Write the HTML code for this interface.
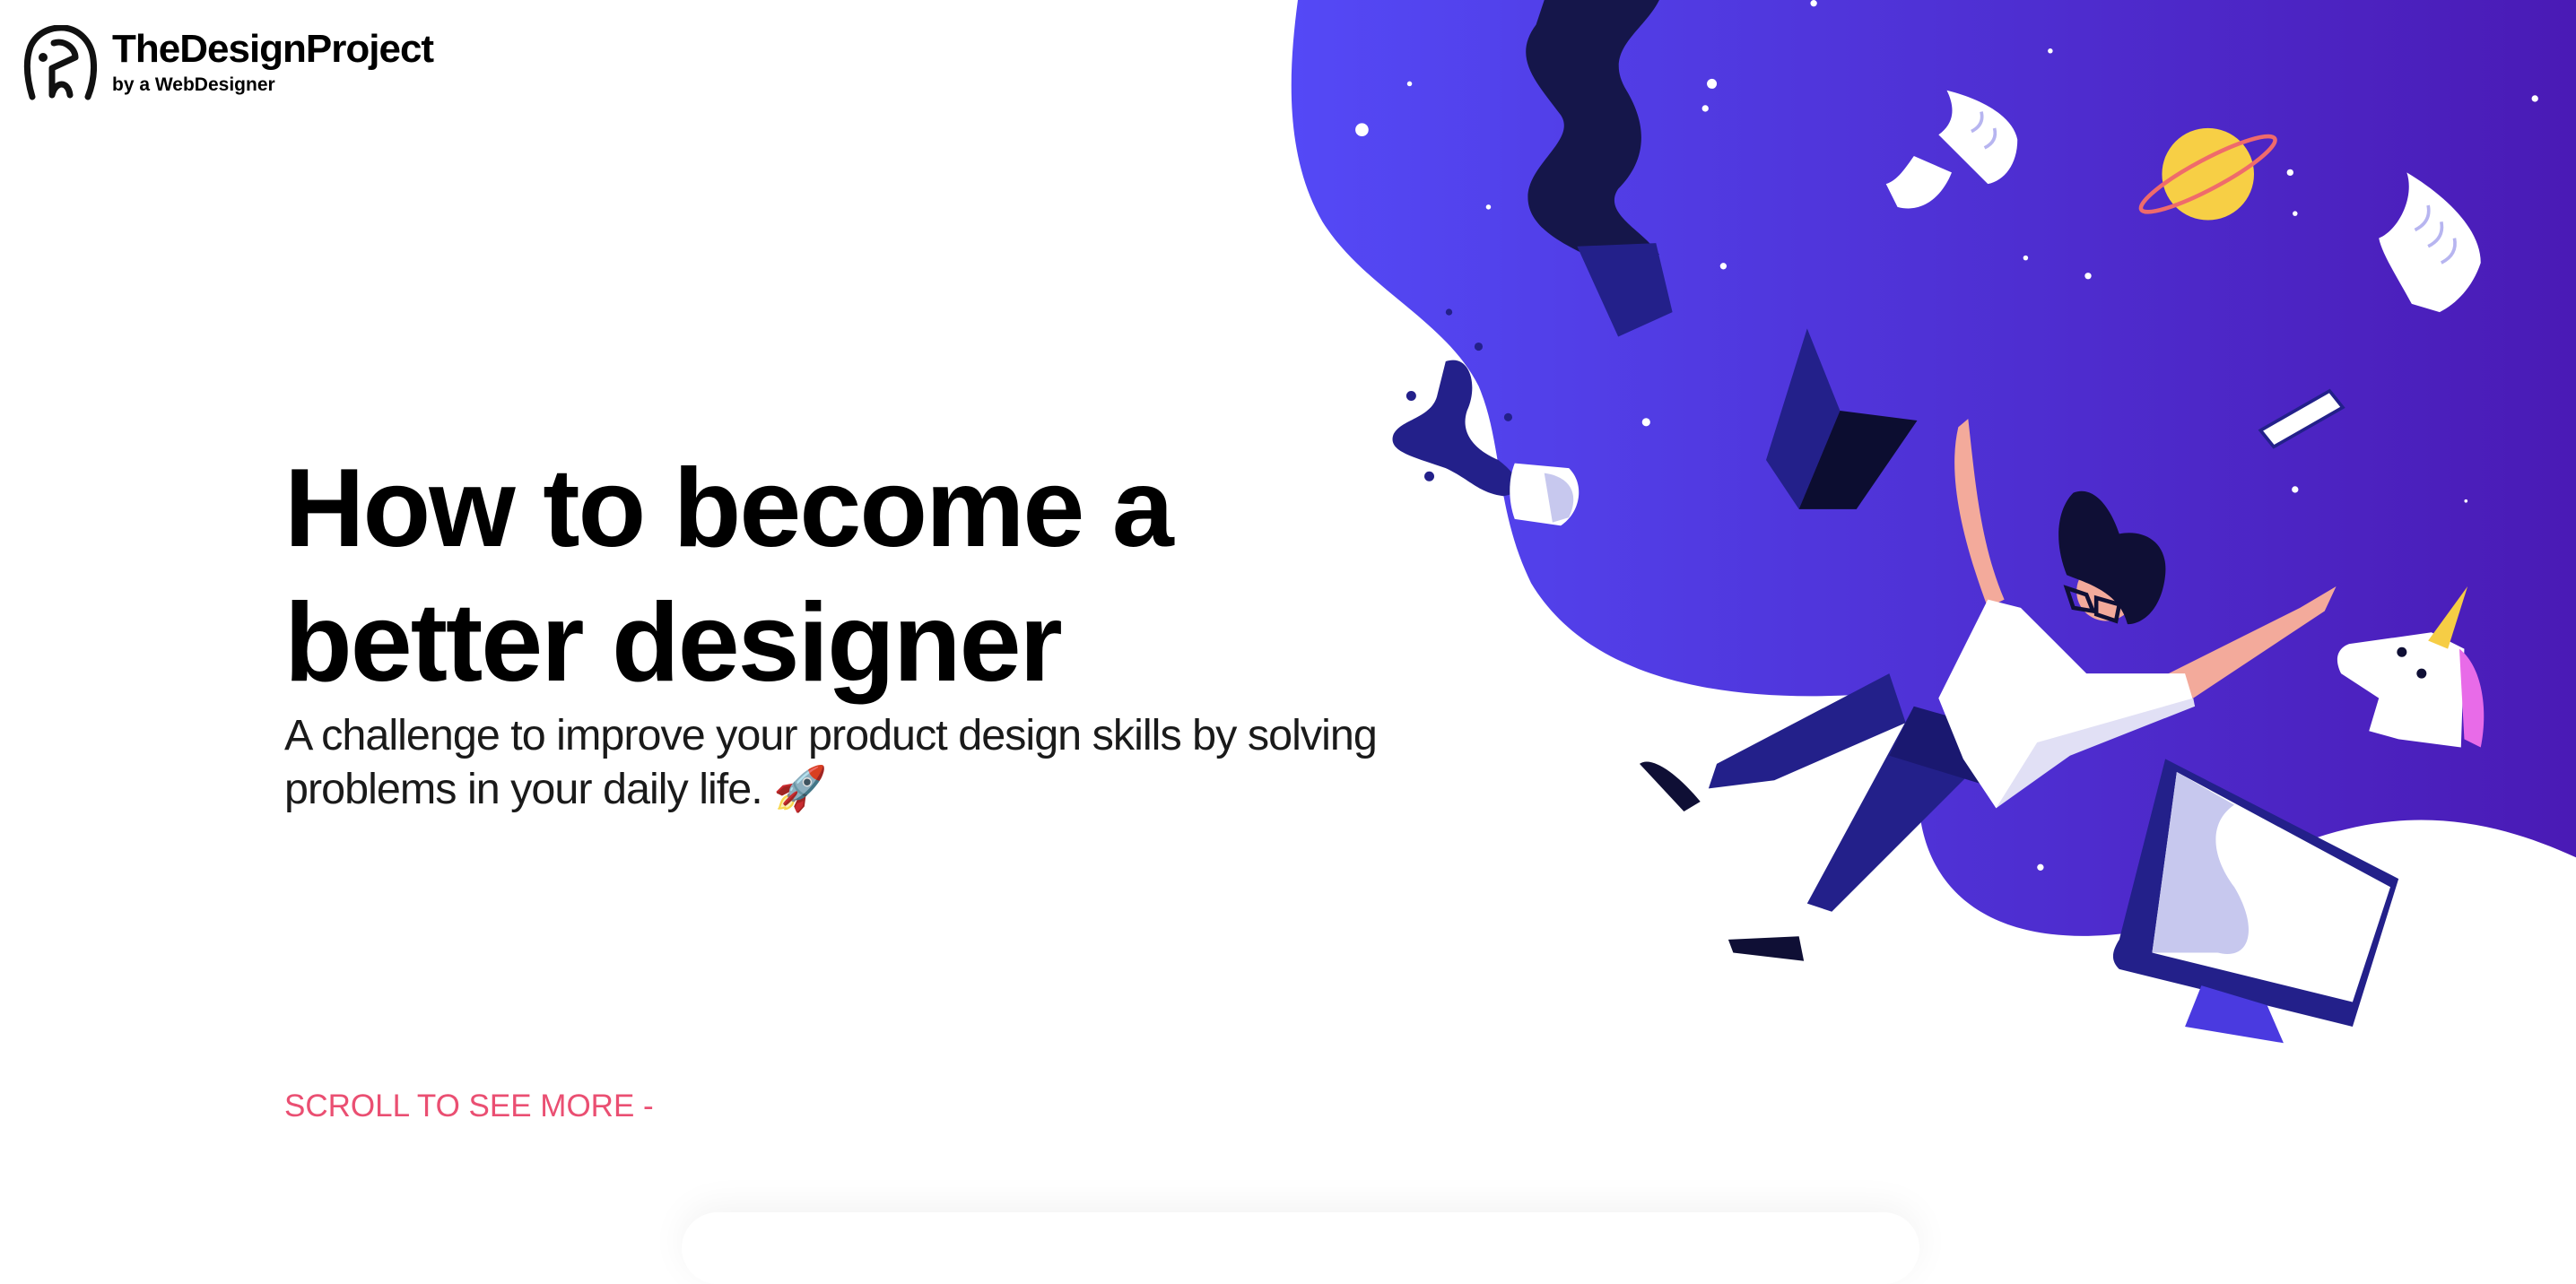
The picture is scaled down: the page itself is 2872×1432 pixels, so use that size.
<!DOCTYPE html>
<html><head><meta charset="utf-8">
<style>
html,body{margin:0;padding:0;width:2872px;height:1352px;overflow:hidden;background:#fff;font-family:"Liberation Sans",sans-serif;}
.abs{position:absolute;}
h1{position:absolute;left:317px;top:492px;margin:0;font-size:124px;line-height:150px;font-weight:bold;color:#000;letter-spacing:-2px;}
.sub{position:absolute;left:317px;top:790px;font-size:48.5px;line-height:60px;color:#1a1a1a;font-weight:normal;letter-spacing:-1px;}
.scroll{position:absolute;left:317px;top:1214px;font-size:35px;color:#ea4f72;}
.logo1{position:absolute;left:125px;top:30px;font-size:44px;font-weight:bold;letter-spacing:-1px;}
.logo2{position:absolute;left:125px;top:83px;font-size:21px;font-weight:bold;}
.shadow{position:absolute;left:760px;top:1352px;width:1380px;height:80px;border-radius:40px;box-shadow:0 -8px 40px rgba(0,0,0,0.05);background:#fff;}
</style></head><body>
<svg class="abs" style="left:0;top:0" width="2872" height="1352" viewBox="0 0 1568 738" preserveAspectRatio="none">
<defs>
<linearGradient id="g" x1="0" x2="1" y1="0" y2="0">
<stop offset="0" stop-color="#5449f6"/><stop offset="1" stop-color="#4a1ab5"/>
</linearGradient>
</defs>
<path d="M790,0 C784,45 782,95 805,135 C830,175 880,195 900,235 C915,270 910,310 932,355 C965,410 1040,428 1130,423 C1160,421 1166,445 1168,490 C1172,545 1215,578 1295,568 L1410,510 C1470,490 1520,500 1568,522 L1568,0 Z" fill="url(#g)"/>
<g fill="#fff">
<circle cx="829" cy="79" r="4"/><circle cx="858" cy="51" r="1.5"/><circle cx="906" cy="126" r="1.5"/><circle cx="1042" cy="51" r="3"/><circle cx="1038" cy="66" r="2"/><circle cx="1049" cy="162" r="2"/><circle cx="1104" cy="2" r="2"/><circle cx="1248" cy="31" r="1.5"/><circle cx="1233" cy="157" r="1.5"/><circle cx="1271" cy="168" r="2"/><circle cx="1002" cy="257" r="2.5"/><circle cx="1099" cy="263" r="3"/><circle cx="1394" cy="105" r="2"/><circle cx="1397" cy="130" r="1.5"/><circle cx="1397" cy="298" r="2"/><circle cx="1501" cy="305" r="1"/><circle cx="1543" cy="60" r="2"/><circle cx="1210" cy="400" r="2.5"/><circle cx="1242" cy="528" r="2"/>
</g>
<path d="M940,0 L1010,0 C1000,20 975,30 990,55 C1005,80 1000,100 985,115 C975,130 1000,140 1010,155 L975,160 C955,150 930,140 930,120 C930,100 960,85 950,70 C935,50 920,35 935,15 Z" fill="#15164a"/>
<path d="M960,150 L1008,148 L1018,190 L985,205 Z" fill="#23208a"/>
<path d="M880,220 C895,215 900,235 893,250 C888,265 900,275 912,280 C925,290 930,300 915,302 C900,300 895,292 880,285 C860,278 845,275 848,265 C852,255 872,255 875,240 Z" fill="#23208a"/>
<circle cx="859" cy="241" r="3" fill="#23208a"/><circle cx="900" cy="211" r="2.5" fill="#23208a"/><circle cx="870" cy="290" r="3" fill="#23208a"/><circle cx="918" cy="254" r="2.5" fill="#23208a"/><circle cx="882" cy="190" r="2" fill="#23208a"/>
<path d="M922,282 L955,285 C965,295 962,312 950,320 L922,316 C918,305 918,292 922,282 Z" fill="#fff"/>
<path d="M940,288 C955,290 962,300 955,315 L945,318 Z" fill="#c7c8ee"/>
<path d="M1100,200 L1075,280 L1095,310 L1120,250 Z" fill="#23208a"/>
<path d="M1120,250 L1167,256 L1130,310 L1095,310 Z" fill="#0c0d30"/>
<path d="M1185,55 C1205,60 1225,70 1228,85 C1228,100 1220,110 1210,112 L1180,82 C1190,75 1190,65 1185,55 Z" fill="#fff"/>
<path d="M1165,95 L1188,105 C1182,120 1170,130 1155,126 L1148,112 C1155,110 1160,102 1165,95 Z" fill="#fff"/>
<path d="M1465,105 C1490,120 1510,140 1510,160 C1505,175 1495,185 1485,190 L1468,185 C1460,170 1450,155 1448,145 C1460,140 1470,120 1465,105 Z" fill="#fff"/>
<g stroke="#b7b5f0" stroke-width="2" fill="none"><path d="M1470,140 q10,-5 8,-15"/><path d="M1478,150 q10,-5 8,-15"/><path d="M1486,160 q10,-5 8,-15"/><path d="M1200,80 q8,-4 6,-12"/><path d="M1208,90 q8,-4 6,-12"/></g>
<circle cx="1344" cy="106" r="28" fill="#f7cf45"/>
<ellipse cx="1344" cy="106" rx="46" ry="9" fill="none" stroke="#ef6b6b" stroke-width="2.5" transform="rotate(-28 1344 106)"/>
<path d="M1376,262 L1418,238 L1426,248 L1384,272 Z" fill="#fff" stroke="#23208a" stroke-width="2"/>
<path d="M1150,410 L1045,465 L1040,480 L1080,475 L1160,440 Z" fill="#23208a"/>
<path d="M1165,430 L1100,550 L1115,555 L1200,470 Z" fill="#23208a"/>
<path d="M1165,430 L1150,460 L1215,480 L1200,440 Z" fill="#1a1870"/>
<path d="M998,465 C1005,460 1020,470 1035,488 L1025,494 Z" fill="#0f0f35"/>
<path d="M1052,572 L1095,570 L1098,585 L1055,580 Z" fill="#0f0f35"/>
<path d="M1192,260 L1198,255 C1202,290 1205,330 1220,365 L1210,370 C1195,330 1185,290 1192,260 Z" fill="#f3aa9b"/>
<path d="M1300,420 L1400,370 L1422,357 L1415,372 L1335,425 Z" fill="#f3aa9b"/>
<path d="M1210,365 L1230,370 L1270,410 L1330,410 L1336,430 L1260,450 L1215,492 L1195,462 L1180,425 Z" fill="#fff"/>
<path d="M1240,452 L1335,425 L1336,430 L1260,460 L1215,492 Z" fill="#e1e0f5"/>
<circle cx="1282" cy="360" r="18" fill="#f3aa9b"/>
<path d="M1262,300 C1275,295 1285,310 1290,325 C1305,322 1320,330 1318,350 C1316,370 1305,380 1295,380 C1290,360 1270,355 1258,350 C1250,330 1252,310 1262,300 Z" fill="#0f0f35"/>
<path d="M1258,358 l12,4 l4,10 l-12,-2 z M1276,364 l14,4 l-2,10 l-12,-4 z" fill="none" stroke="#0f0f35" stroke-width="2.5"/>
<path d="M1430,392 L1480,385 L1500,395 L1498,455 L1460,450 L1442,445 L1448,425 L1425,410 C1420,400 1424,394 1430,392 Z" fill="#fff"/>
<path d="M1497,395 C1510,405 1515,430 1510,455 L1500,450 Z" fill="#e86be8"/>
<path d="M1478,390 L1502,357 L1490,395 Z" fill="#f6cd45"/>
<circle cx="1462" cy="397" r="3" fill="#0f0f35"/><circle cx="1474" cy="410" r="3" fill="#0f0f35"/>
<path d="M1318,462 L1460,535 L1432,625 L1290,590 C1285,585 1285,580 1290,572 Z" fill="#23208a"/>
<path d="M1325,470 L1455,540 L1432,610 L1310,580 Z" fill="#fff"/>
<path d="M1325,470 L1360,490 C1345,500 1345,520 1360,540 C1375,565 1370,585 1350,580 L1310,580 Z" fill="#c7c8ee"/>
<path d="M1340,600 L1380,612 L1390,635 L1330,625 Z" fill="#4a3ae0"/>
</svg>
<svg class="abs" style="left:26px;top:28px" width="82" height="84" viewBox="0 0 82 84">
<path d="M10,80 C4,60 2,40 8,24 C16,6 34,2 46,3 C62,5 76,18 78,38 C80,55 76,70 72,80" fill="none" stroke="#111" stroke-width="7" stroke-linecap="round"/>
<path d="M34,20 C46,16 58,26 58,36 L32,48 L32,78 M32,78 C36,62 50,62 52,78" fill="none" stroke="#111" stroke-width="7" stroke-linecap="round" stroke-linejoin="round"/>
<circle cx="22" cy="36" r="5" fill="#111"/>
</svg>
<div class="logo1">TheDesignProject</div>
<div class="logo2">by a WebDesigner</div>
<h1>How to become a<br>better designer</h1>
<div class="sub">A challenge to improve your product design skills by solving<br>problems in your daily life. 🚀</div>
<div class="scroll">SCROLL TO SEE MORE -</div>
<div class="shadow"></div>
</body></html>
